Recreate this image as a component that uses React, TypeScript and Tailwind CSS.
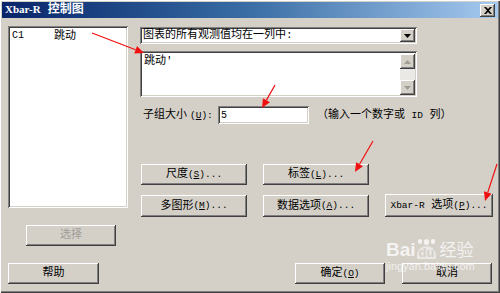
import { ReactNode } from 'react'

const raised =
  'bg-[#d4d0c8] shadow-[inset_-1px_-1px_#404040,inset_1px_1px_#ffffff,inset_-2px_-2px_#808080,inset_2px_2px_#d4d0c8]'
const sunken =
  'bg-white shadow-[inset_1px_1px_#808080,inset_-1px_-1px_#ffffff,inset_2px_2px_#404040,inset_-2px_-2px_#d4d0c8]'
const font = "font-['Liberation_Mono','Noto_Sans_CJK_SC',monospace]"

function L({ children }: { children: ReactNode }) {
  // latin part, narrow like SimSun half-width glyphs
  return <span className="text-[9.5px]">{children}</span>
}

function Btn({ children, className = '', disabled = false }: { children: ReactNode; className?: string; disabled?: boolean }) {
  return (
    <div
      className={`${raised} h-[21px] flex items-center justify-center whitespace-nowrap text-[11px] leading-none ${
        disabled ? 'text-[#a09d97]' : 'text-black'
      } ${className}`}
    >
      {children}
    </div>
  )
}

function Arrow({ x1, y1, x2, y2 }: { x1: number; y1: number; x2: number; y2: number }) {
  const a = Math.atan2(y2 - y1, x2 - x1)
  const len = 9
  const w = 4
  const bx = x2 - len * Math.cos(a)
  const by = y2 - len * Math.sin(a)
  const p1 = `${bx + w * Math.sin(a)},${by - w * Math.cos(a)}`
  const p2 = `${bx - w * Math.sin(a)},${by + w * Math.cos(a)}`
  return (
    <g>
      <line x1={x1} y1={y1} x2={bx} y2={by} stroke="#f01010" strokeWidth="1.2" />
      <polygon points={`${x2},${y2} ${p1} ${p2}`} fill="#f01010" />
    </g>
  )
}

export default function App() {
  return (
    <div
      className={`relative w-[500px] h-[293px] overflow-hidden bg-[#d4d0c8] ${font} text-black shadow-[inset_1px_1px_#ffffff,inset_-1px_-1px_#404040,inset_-2px_-2px_#808080] flex flex-col`}
    >
      {/* title bar */}
      <div className="mx-[2px] mt-[2px] h-[16px] flex items-center justify-between pl-[3px] pr-[3px] bg-gradient-to-r from-[#0a246a] via-[#3a6ea5] to-[#a6caf0]">
        <span className="text-white text-[12px] font-bold leading-none whitespace-nowrap">
          <span className="font-['Liberation_Serif',serif] text-[11px]">Xbar-R</span> 控制图
        </span>
        <div className={`${raised} w-[15px] h-[13px] flex items-center justify-center`}>
          <svg width="8" height="7" viewBox="0 0 8 7">
            <path d="M0 0h2l2 2 2-2h2L5 3.5 8 7H6L4 5 2 7H0l3-3.5z" fill="#000" />
          </svg>
        </div>
      </div>

      {/* main */}
      <div className="flex mt-[8px]">
        <div className="ml-[8px] w-[120px] flex flex-col">
          <div className={`${sunken} h-[182px] pt-[3px] pl-[4px] text-[11px] leading-[14px] flex`}>
            <span className="w-[42px] text-[10px]">C1</span>
            <span>跳动</span>
          </div>
          <Btn disabled className="mt-[17px] ml-[18px] w-[90px]">
            选择
          </Btn>
        </div>

        <div className="ml-[12px] w-[353px] flex flex-col">
          <div className={`${sunken} mt-[1px] w-[277px] h-[17px] flex items-center pl-[3px] pr-[2px] text-[11px]`}>
            <span className="flex-1 leading-none whitespace-nowrap">图表的所有观测值均在一列中:</span>
            <div className={`${raised} w-[15px] h-[13px] flex items-center justify-center`}>
              <svg width="7" height="4" viewBox="0 0 7 4">
                <path d="M0 0h7L3.5 4z" fill="#000" />
              </svg>
            </div>
          </div>

          <div className={`${sunken} mt-[7px] w-[277px] h-[46px] flex pl-[4px] pt-[3px] pr-[2px] pb-[2px]`}>
            <span className="flex-1 text-[11px] leading-[14px]">跳动'</span>
            <div className="w-[15px] flex flex-col bg-[#ebe9e5]">
              <div className={`${raised} h-[15px] flex items-center justify-center`}>
                <svg width="7" height="4" viewBox="0 0 7 4">
                  <path d="M0 4h7L3.5 0z" fill="#a09d97" />
                </svg>
              </div>
              <div className="flex-1" />
              <div className={`${raised} h-[15px] flex items-center justify-center`}>
                <svg width="7" height="4" viewBox="0 0 7 4">
                  <path d="M0 0h7L3.5 4z" fill="#a09d97" />
                </svg>
              </div>
            </div>
          </div>

          <div className="mt-[9px] flex items-center h-[18px] text-[11px] whitespace-nowrap">
            <span className="w-[78px] shrink-0 pl-[3px] leading-none flex items-center">
              子组大小<span className="ml-[3px]"><L>(<u>U</u>):</L></span>
            </span>
            <div className={`${sunken} shrink-0 w-[91px] h-[18px] pl-[3px] flex items-center text-[10px]`}>5</div>
            <span className="ml-[8px] leading-none">
              （输入一个数字或 <L>ID</L> 列）
            </span>
          </div>

          <div className="mt-[40px] ml-[1px] flex gap-[16px]">
            <Btn className="w-[106px]">
              尺度<L>(<u>S</u>)...</L>
            </Btn>
            <Btn className="w-[106px]">
              标签<L>(<u>L</u>)...</L>
            </Btn>
          </div>
          <div className="mt-[10px] ml-[1px] flex gap-[16px]">
            <Btn className="w-[106px] h-[22px]">
              多图形<L>(<u>M</u>)...</L>
            </Btn>
            <Btn className="w-[106px] h-[22px]">
              数据选项<L>(<u>A</u>)...</L>
            </Btn>
            <Btn className="w-[108px] h-[23px] -mt-[1px]">
              <L>Xbar-R</L>&nbsp;选项<L>(<u>P</u>)...</L>
            </Btn>
          </div>
        </div>
      </div>

      {/* footer */}
      <div className="mt-[17px] flex">
        <Btn className="ml-[8px] w-[91px]">帮助</Btn>
        <Btn className="ml-auto w-[90px]">
          确定<L>(<u>O</u>)</L>
        </Btn>
        <Btn className="ml-[17px] mr-[8px] w-[90px]">取消</Btn>
      </div>

      {/* watermark */}
      <div className="absolute left-[386px] top-[239px] text-white/75 pointer-events-none flex flex-col items-start">
        <div className="flex items-end font-['Liberation_Sans','Noto_Sans_CJK_SC',sans-serif] leading-none">
          <span className="text-[19px] font-bold">Bai</span>
          <span className="flex flex-col items-center ml-[1px]">
            <span className="flex gap-[2px] mb-[1px]">
              <span className="w-[4px] h-[5px] rounded-full bg-white/75" />
              <span className="w-[5px] h-[6px] rounded-full bg-white/75" />
              <span className="w-[4px] h-[5px] rounded-full bg-white/75" />
            </span>
            <span className="text-[13px] font-bold px-[2px] rounded-t-full bg-white/50 text-[#d4d0c8]">du</span>
          </span>
          <span className="text-[17px] ml-[3px]">经验</span>
        </div>
        <span className="mt-[2px] text-[11px] leading-none font-['Liberation_Sans',sans-serif] text-white/70 whitespace-nowrap">
          jingyan.baidu.com
        </span>
      </div>

      {/* annotation arrows */}
      <svg className="absolute inset-0 pointer-events-none" width="500" height="293">
        <Arrow x1={92} y1={33} x2={144} y2={53} />
        <Arrow x1={275} y1={85} x2={262} y2={108} />
        <Arrow x1={373} y1={141} x2={355} y2={172} />
        <Arrow x1={497} y1={164} x2={485} y2={201} />
      </svg>
    </div>
  )
}
